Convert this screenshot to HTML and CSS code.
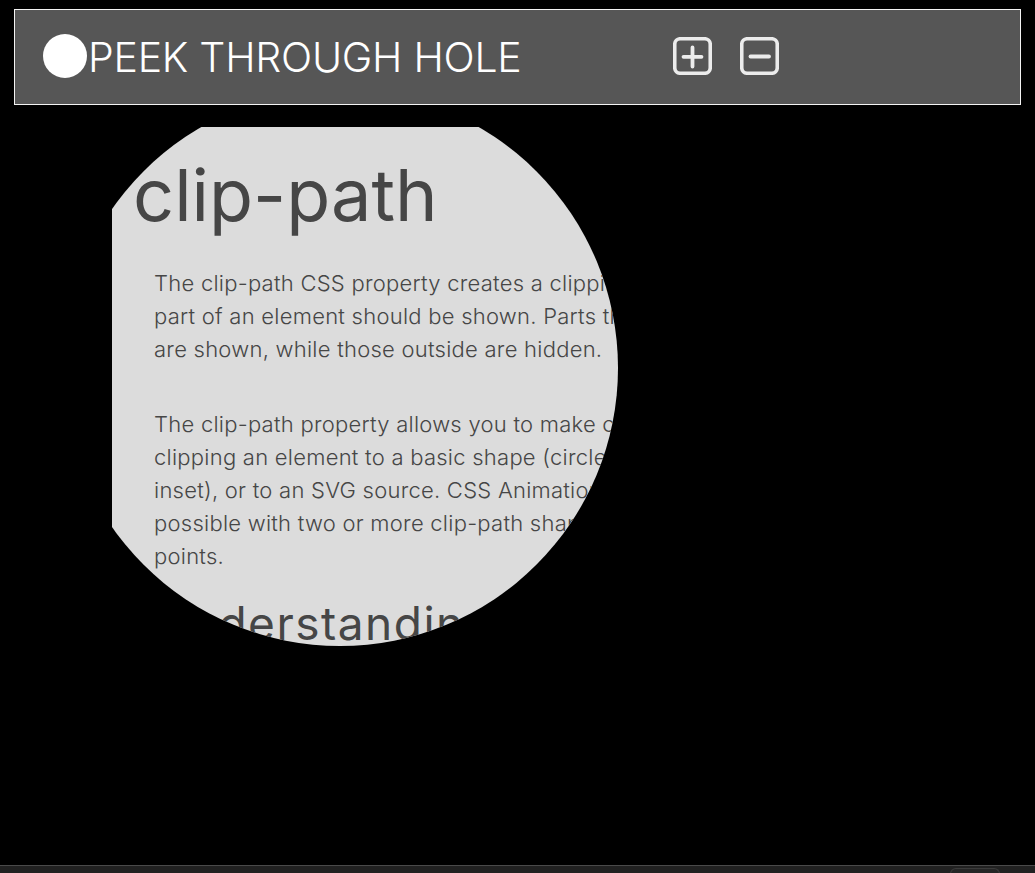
FILE: index.html
```html
<!DOCTYPE html>
<html lang="en">
<head>
<meta charset="utf-8">
<title>Peek through hole</title>
<link rel="stylesheet" href="styles.css">
</head>
<body>
<header class="topbar">
  <div class="brand">
    <span class="brand-dot"></span>
    <h1 class="brand-title">PEEK THROUGH HOLE</h1>
  </div>
  <div class="controls">
    <button class="ctrl" aria-label="Bigger hole">
      <svg viewBox="0 0 39 38" width="39" height="38">
        <rect x="1.75" y="1.75" width="35.5" height="34.5" rx="5.5" fill="none" stroke="#ececec" stroke-width="3.6"/>
        <path d="M10.5 19.8H28.5M19.5 10.5V29.5" stroke="#ececec" stroke-width="3.8" stroke-linecap="round"/>
      </svg>
    </button>
    <button class="ctrl" aria-label="Smaller hole">
      <svg viewBox="0 0 39 38" width="39" height="38">
        <rect x="1.75" y="1.75" width="35.5" height="34.5" rx="5.5" fill="none" stroke="#ececec" stroke-width="3.6"/>
        <path d="M10.5 19.5H29" stroke="#ececec" stroke-width="3.8" stroke-linecap="round"/>
      </svg>
    </button>
  </div>
</header>

<main class="peek">
  <h2 class="peek-title">clip-path</h2>
  <p class="peek-text">The clip-path CSS property creates a clipping region that sets what<br>part of an element should be shown. Parts that are inside the region<br>are shown, while those outside are hidden.</p>
  <p class="peek-text">The clip-path property allows you to make complex shapes in CSS by<br>clipping an element to a basic shape (circle, ellipse, polygon, or<br>inset), or to an SVG source. CSS Animations and transitions are<br>possible with two or more clip-path shapes with the same number of<br>points.</p>
  <h3 class="peek-sub">Understanding clip-path</h3>
</main>

<footer class="dock">
  <span class="dock-tab"></span>
</footer>
</body>
</html>
```

FILE: styles.css
```css
html, body {
  margin: 0;
  padding: 0;
  background: #000;
}

body {
  height: 100vh;
  display: flex;
  flex-direction: column;
  overflow: hidden;
  font-family: "Inter", "Open Sans", sans-serif;
}

.topbar {
  margin: 9px 14px 0;
  height: 94px;
  flex: 0 0 auto;
  background: #565656;
  border: 1px solid #f4f4f4;
  display: flex;
  align-items: center;
  padding-left: 28px;
}

.brand {
  flex: 0 0 630px;
  display: flex;
  align-items: center;
}

.brand-dot {
  width: 44px;
  height: 44px;
  border-radius: 50%;
  background: #fff;
  flex: 0 0 auto;
  margin-top: -2px;
}

.brand-title {
  margin: 0 0 0 1px;
  font-weight: 300;
  font-size: 41px;
  color: #fff;
  letter-spacing: -0.25px;
  line-height: 1;
}

.controls {
  display: flex;
  gap: 28px;
  align-items: center;
  margin-top: -2px;
}

.ctrl {
  background: none;
  border: 0;
  padding: 0;
  width: 39px;
  height: 38px;
  display: block;
}

.ctrl svg {
  display: block;
}

.peek {
  flex: 0 0 auto;
  margin: 22px 0 0 112px;
  width: 811px;
  background: #dcdcdc;
  color: #464646;
  clip-path: circle(278px at 228px 241px);
  padding: 0 21px;
  box-sizing: border-box;
}

.peek-title {
  margin: 0;
  padding-top: 20px;
  font-weight: 400;
  font-size: 72px;
  line-height: 96px;
  letter-spacing: 0;
}

.peek-text {
  margin: 24px 21px 0;
  font-weight: 300;
  font-size: 22px;
  line-height: 33px;
  letter-spacing: 0.25px;
  white-space: nowrap;
}

.peek-text + .peek-text {
  margin-top: 42px;
}

.peek-sub {
  margin: 22px 21px 0;
  font-weight: 400;
  font-size: 46px;
  line-height: 56px;
  letter-spacing: 1.5px;
  white-space: nowrap;
  padding-bottom: 40px;
}

.dock {
  margin-top: auto;
  height: 7px;
  flex: 0 0 auto;
  background: #212121;
  border-top: 1px solid #4a4a4a;
  position: relative;
}

.dock-tab {
  position: absolute;
  left: 950px;
  top: 2px;
  width: 48px;
  height: 6px;
  border: 1px solid #3a3a3a;
  border-bottom: 0;
  border-radius: 6px 6px 0 0;
  background: #262626;
}
```
